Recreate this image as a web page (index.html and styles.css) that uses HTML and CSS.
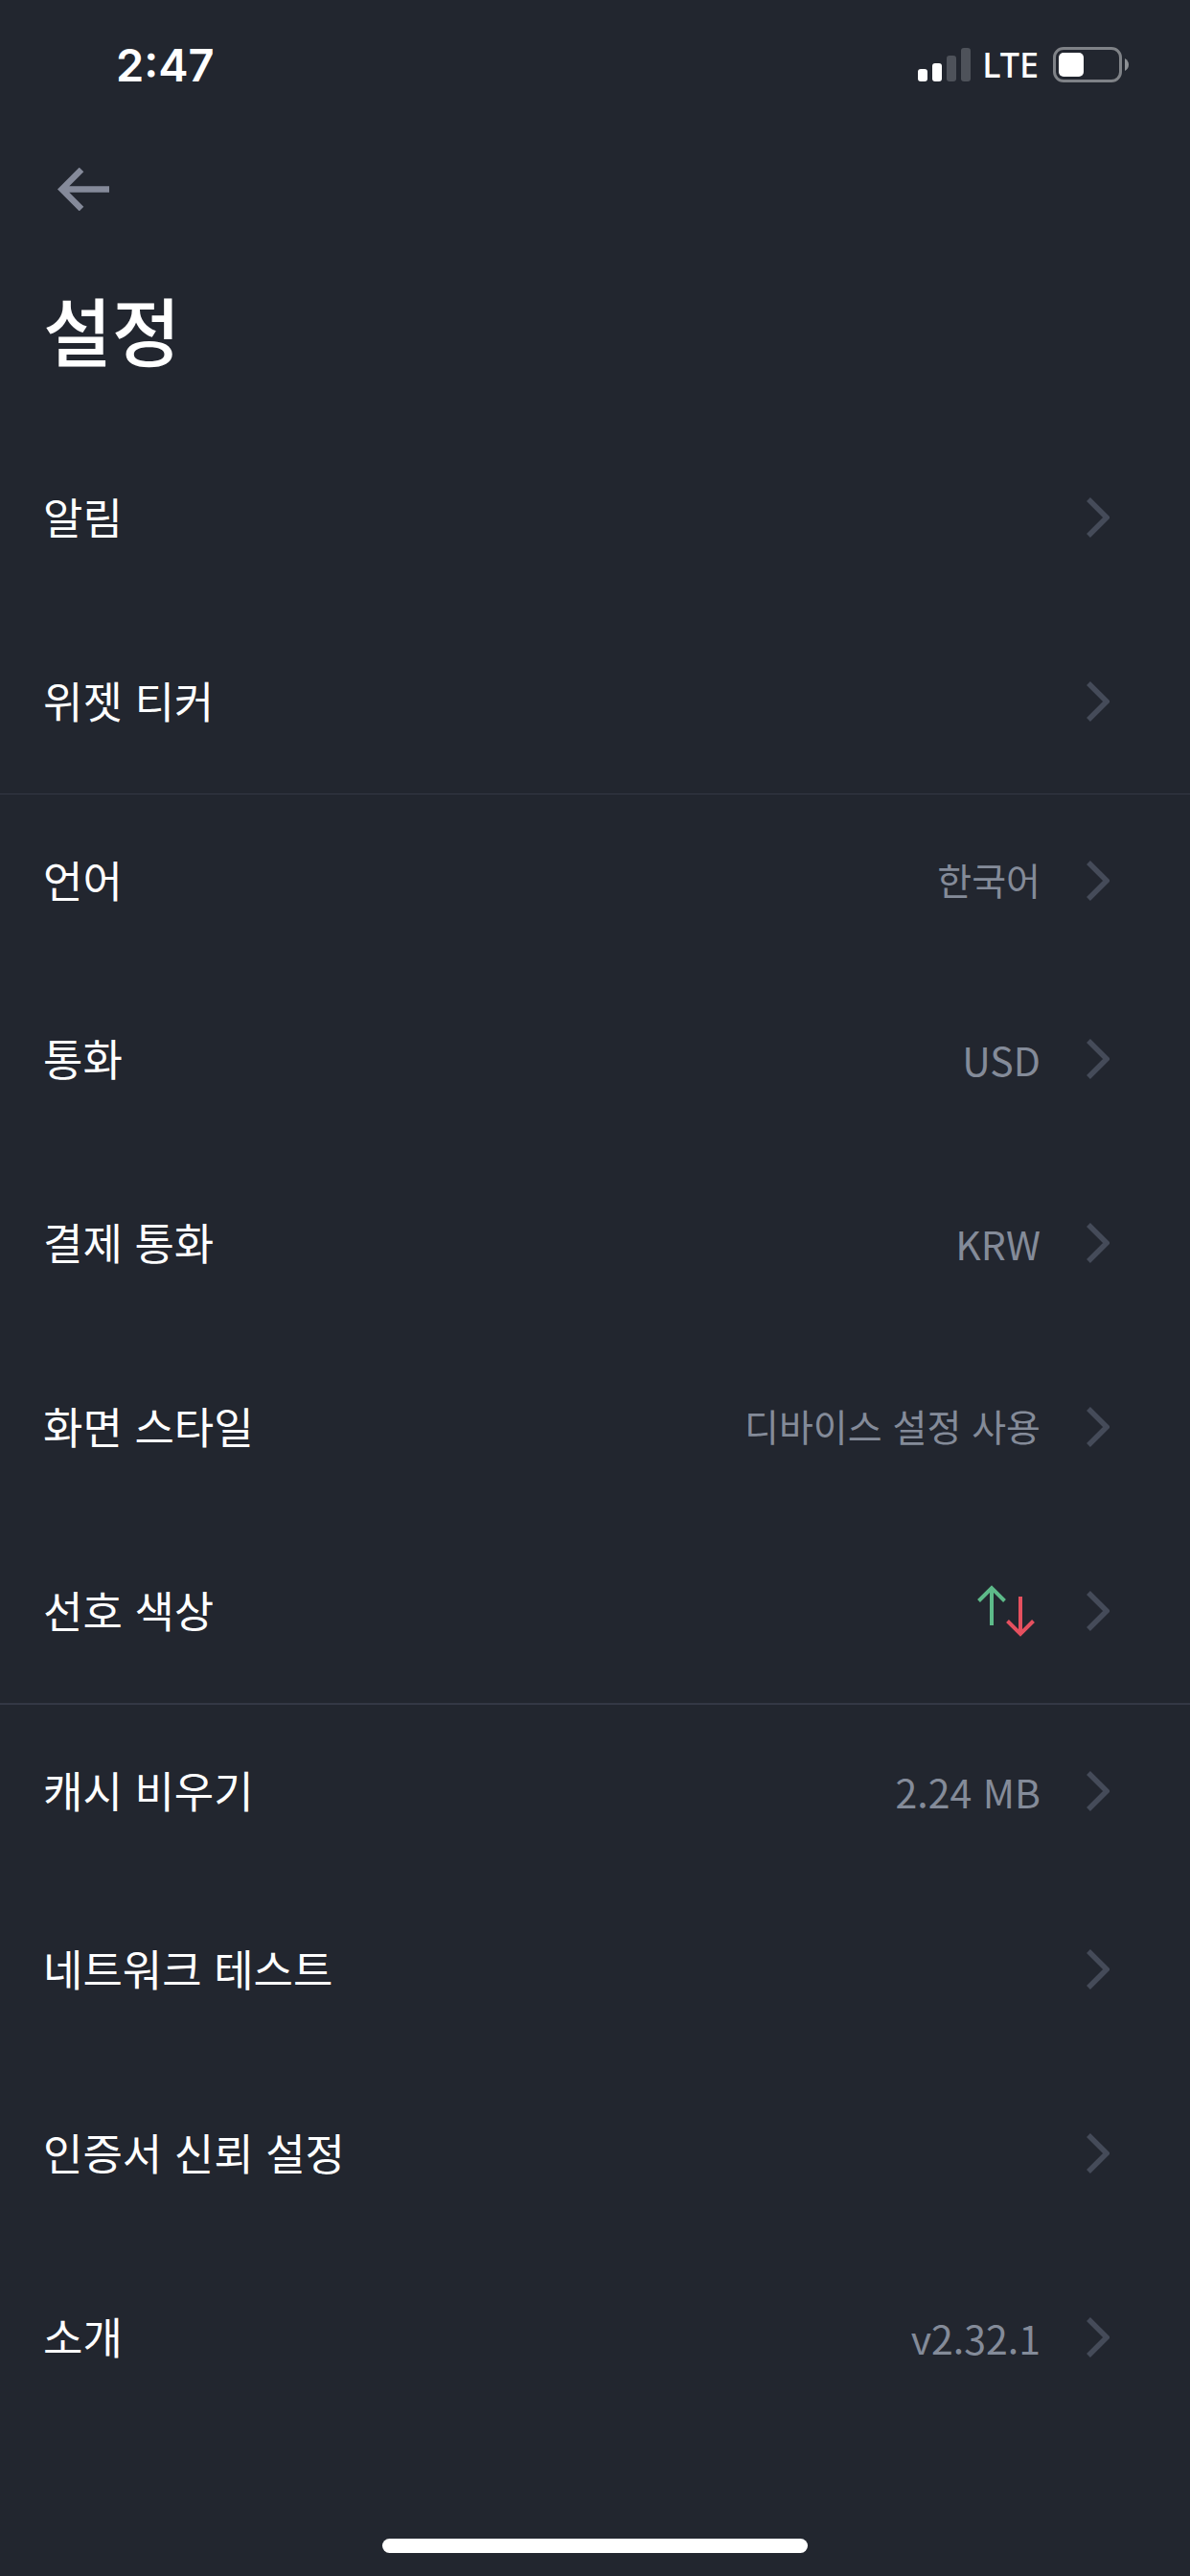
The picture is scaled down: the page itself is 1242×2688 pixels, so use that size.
FILE: index.html
```html
<!DOCTYPE html>
<html lang="ko">
<head>
    <meta charset="UTF-8">
    <meta name="viewport" content="width=device-width, initial-scale=1.0">
    <title>설정</title>
    <link rel="stylesheet" href="styles.css">
</head>
<body>
    <svg class="sprite" aria-hidden="true">
        <symbol id="chevron" viewBox="0 0 24 42">
            <path d="M2 2 L21 21 L2 40" fill="none" stroke="currentColor" stroke-width="5.500"/>
        </symbol>
    </svg>

    <div class="screen">
        <div class="status-bar">
            <span class="status-time">2:47</span>
            <div class="status-icons">
                <svg class="signal" viewBox="0 0 55 36" aria-hidden="true">
                    <rect x="0" y="22" width="10" height="13" rx="3" fill="#fff"/>
                    <rect x="15" y="16" width="10" height="19" rx="3" fill="#fff"/>
                    <rect x="30" y="8" width="10" height="27" rx="3" fill="#4e525a"/>
                    <rect x="45" y="0" width="10" height="35" rx="3" fill="#4e525a"/>
                </svg>
                <span class="network">LTE</span>
                <svg class="battery" viewBox="0 0 79 37" aria-hidden="true">
                    <rect x="1.5" y="1.5" width="69" height="34" rx="9.5" fill="none" stroke="#7f8287" stroke-width="3"/>
                    <rect x="6" y="6" width="26" height="25" rx="5" fill="#fff"/>
                    <path d="M75 12 Q79 14.500 79 18.500 Q79 22.500 75 25 Z" fill="#8d9094"/>
                </svg>
            </div>
        </div>

        <header class="header">
            <button type="button" class="back-btn" aria-label="뒤로">
                <svg viewBox="0 0 54 45" aria-hidden="true">
                    <path d="M54 22.500 H7 M25 2 L4.500 22.500 L25 43" fill="none" stroke="#858a9a" stroke-width="6.500"/>
                </svg>
            </button>
            <h1>설정</h1>
        </header>

        <main class="settings">
            <section class="group">
                <a href="#" class="row">
                    <span class="label">알림</span>
                    <svg class="chevron" aria-hidden="true"><use href="#chevron"/></svg>
                </a>
                <a href="#" class="row">
                    <span class="label">위젯 티커</span>
                    <svg class="chevron" aria-hidden="true"><use href="#chevron"/></svg>
                </a>
            </section>

            <section class="group">
                <a href="#" class="row">
                    <span class="label">언어</span>
                    <span class="value">한국어</span>
                    <svg class="chevron" aria-hidden="true"><use href="#chevron"/></svg>
                </a>
                <a href="#" class="row">
                    <span class="label">통화</span>
                    <span class="value latin">USD</span>
                    <svg class="chevron" aria-hidden="true"><use href="#chevron"/></svg>
                </a>
                <a href="#" class="row">
                    <span class="label">결제 통화</span>
                    <span class="value latin">KRW</span>
                    <svg class="chevron" aria-hidden="true"><use href="#chevron"/></svg>
                </a>
                <a href="#" class="row">
                    <span class="label">화면 스타일</span>
                    <span class="value">디바이스 설정 사용</span>
                    <svg class="chevron" aria-hidden="true"><use href="#chevron"/></svg>
                </a>
                <a href="#" class="row">
                    <span class="label">선호 색상</span>
                    <svg class="updown" viewBox="0 0 66 54" aria-hidden="true">
                        <path d="M15 42 V3 M1.500 16.500 L15 3 L28.500 16.500" fill="none" stroke="#5dba89" stroke-width="4"/>
                        <path d="M45 12 V51 M31.500 37.500 L45 51 L58.500 37.500" fill="none" stroke="#e5505f" stroke-width="4"/>
                    </svg>
                    <svg class="chevron" aria-hidden="true"><use href="#chevron"/></svg>
                </a>
            </section>

            <section class="group group-strong">
                <a href="#" class="row">
                    <span class="label">캐시 비우기</span>
                    <span class="value latin">2.24 MB</span>
                    <svg class="chevron" aria-hidden="true"><use href="#chevron"/></svg>
                </a>
                <a href="#" class="row">
                    <span class="label">네트워크 테스트</span>
                    <svg class="chevron" aria-hidden="true"><use href="#chevron"/></svg>
                </a>
                <a href="#" class="row">
                    <span class="label">인증서 신뢰 설정</span>
                    <svg class="chevron" aria-hidden="true"><use href="#chevron"/></svg>
                </a>
                <a href="#" class="row">
                    <span class="label">소개</span>
                    <span class="value latin">v2.32.1</span>
                    <svg class="chevron" aria-hidden="true"><use href="#chevron"/></svg>
                </a>
            </section>
        </main>

        <div class="home-indicator"></div>
    </div>
</body>
</html>
```

FILE: styles.css
```css
* {
    margin: 0;
    padding: 0;
    box-sizing: border-box;
}

body {
    font-family: "Noto Sans CJK KR", sans-serif;
    background: #22262f;
    color: #fff;
}

.sprite {
    display: none;
}

.screen {
    display: flex;
    flex-direction: column;
    min-height: 100vh;
    padding-bottom: 24px;
}

/* Status bar */
.status-bar {
    display: flex;
    justify-content: space-between;
    align-items: center;
    height: 135px;
    padding: 0 64px 0 121px;
}

.status-time {
    font-family: Inter, sans-serif;
    font-size: 47px;
    font-weight: 600;
}

.status-icons {
    display: flex;
    align-items: center;
}

.signal {
    width: 55px;
    height: 36px;
}

.network {
    margin: 0 15px 0 12px;
    font-family: "Noto Sans", sans-serif;
    font-size: 36px;
    font-weight: 500;
}

.battery {
    width: 79px;
    height: 37px;
}

/* Header */
.header {
    padding: 0 45px;
}

.back-btn {
    display: flex;
    align-items: center;
    height: 124px;
    padding: 0 15px;
    border: none;
    background: none;
    cursor: pointer;
}

.back-btn svg {
    width: 54px;
    height: 45px;
}

.header h1 {
    padding: 26px 0 43px;
    font-size: 78px;
    font-weight: 500;
    line-height: 116px;
}

/* Settings list */
.group + .group {
    border-top: 1px solid #343845;
}

.group + .group-strong {
    border-top-width: 2px;
}

.row {
    display: flex;
    align-items: center;
    height: 192px;
    padding: 0 84px 0 45px;
    color: inherit;
    text-decoration: none;
}

.group + .group .row:first-child {
    height: 180px;
}

.label {
    flex: 1;
    padding-bottom: 4px;
    font-size: 45px;
}

.value {
    padding-bottom: 4px;
    color: #848b99;
    font-size: 39px;
}

.value.latin {
    padding-bottom: 0;
    font-size: 41px;
}

.updown {
    width: 66px;
    height: 54px;
}

.chevron {
    width: 24px;
    height: 42px;
    margin-left: 48px;
    color: #454b59;
}

.home-indicator {
    width: 444px;
    height: 15px;
    margin: auto auto 0;
    border-radius: 8px;
    background: #fff;
}
```
